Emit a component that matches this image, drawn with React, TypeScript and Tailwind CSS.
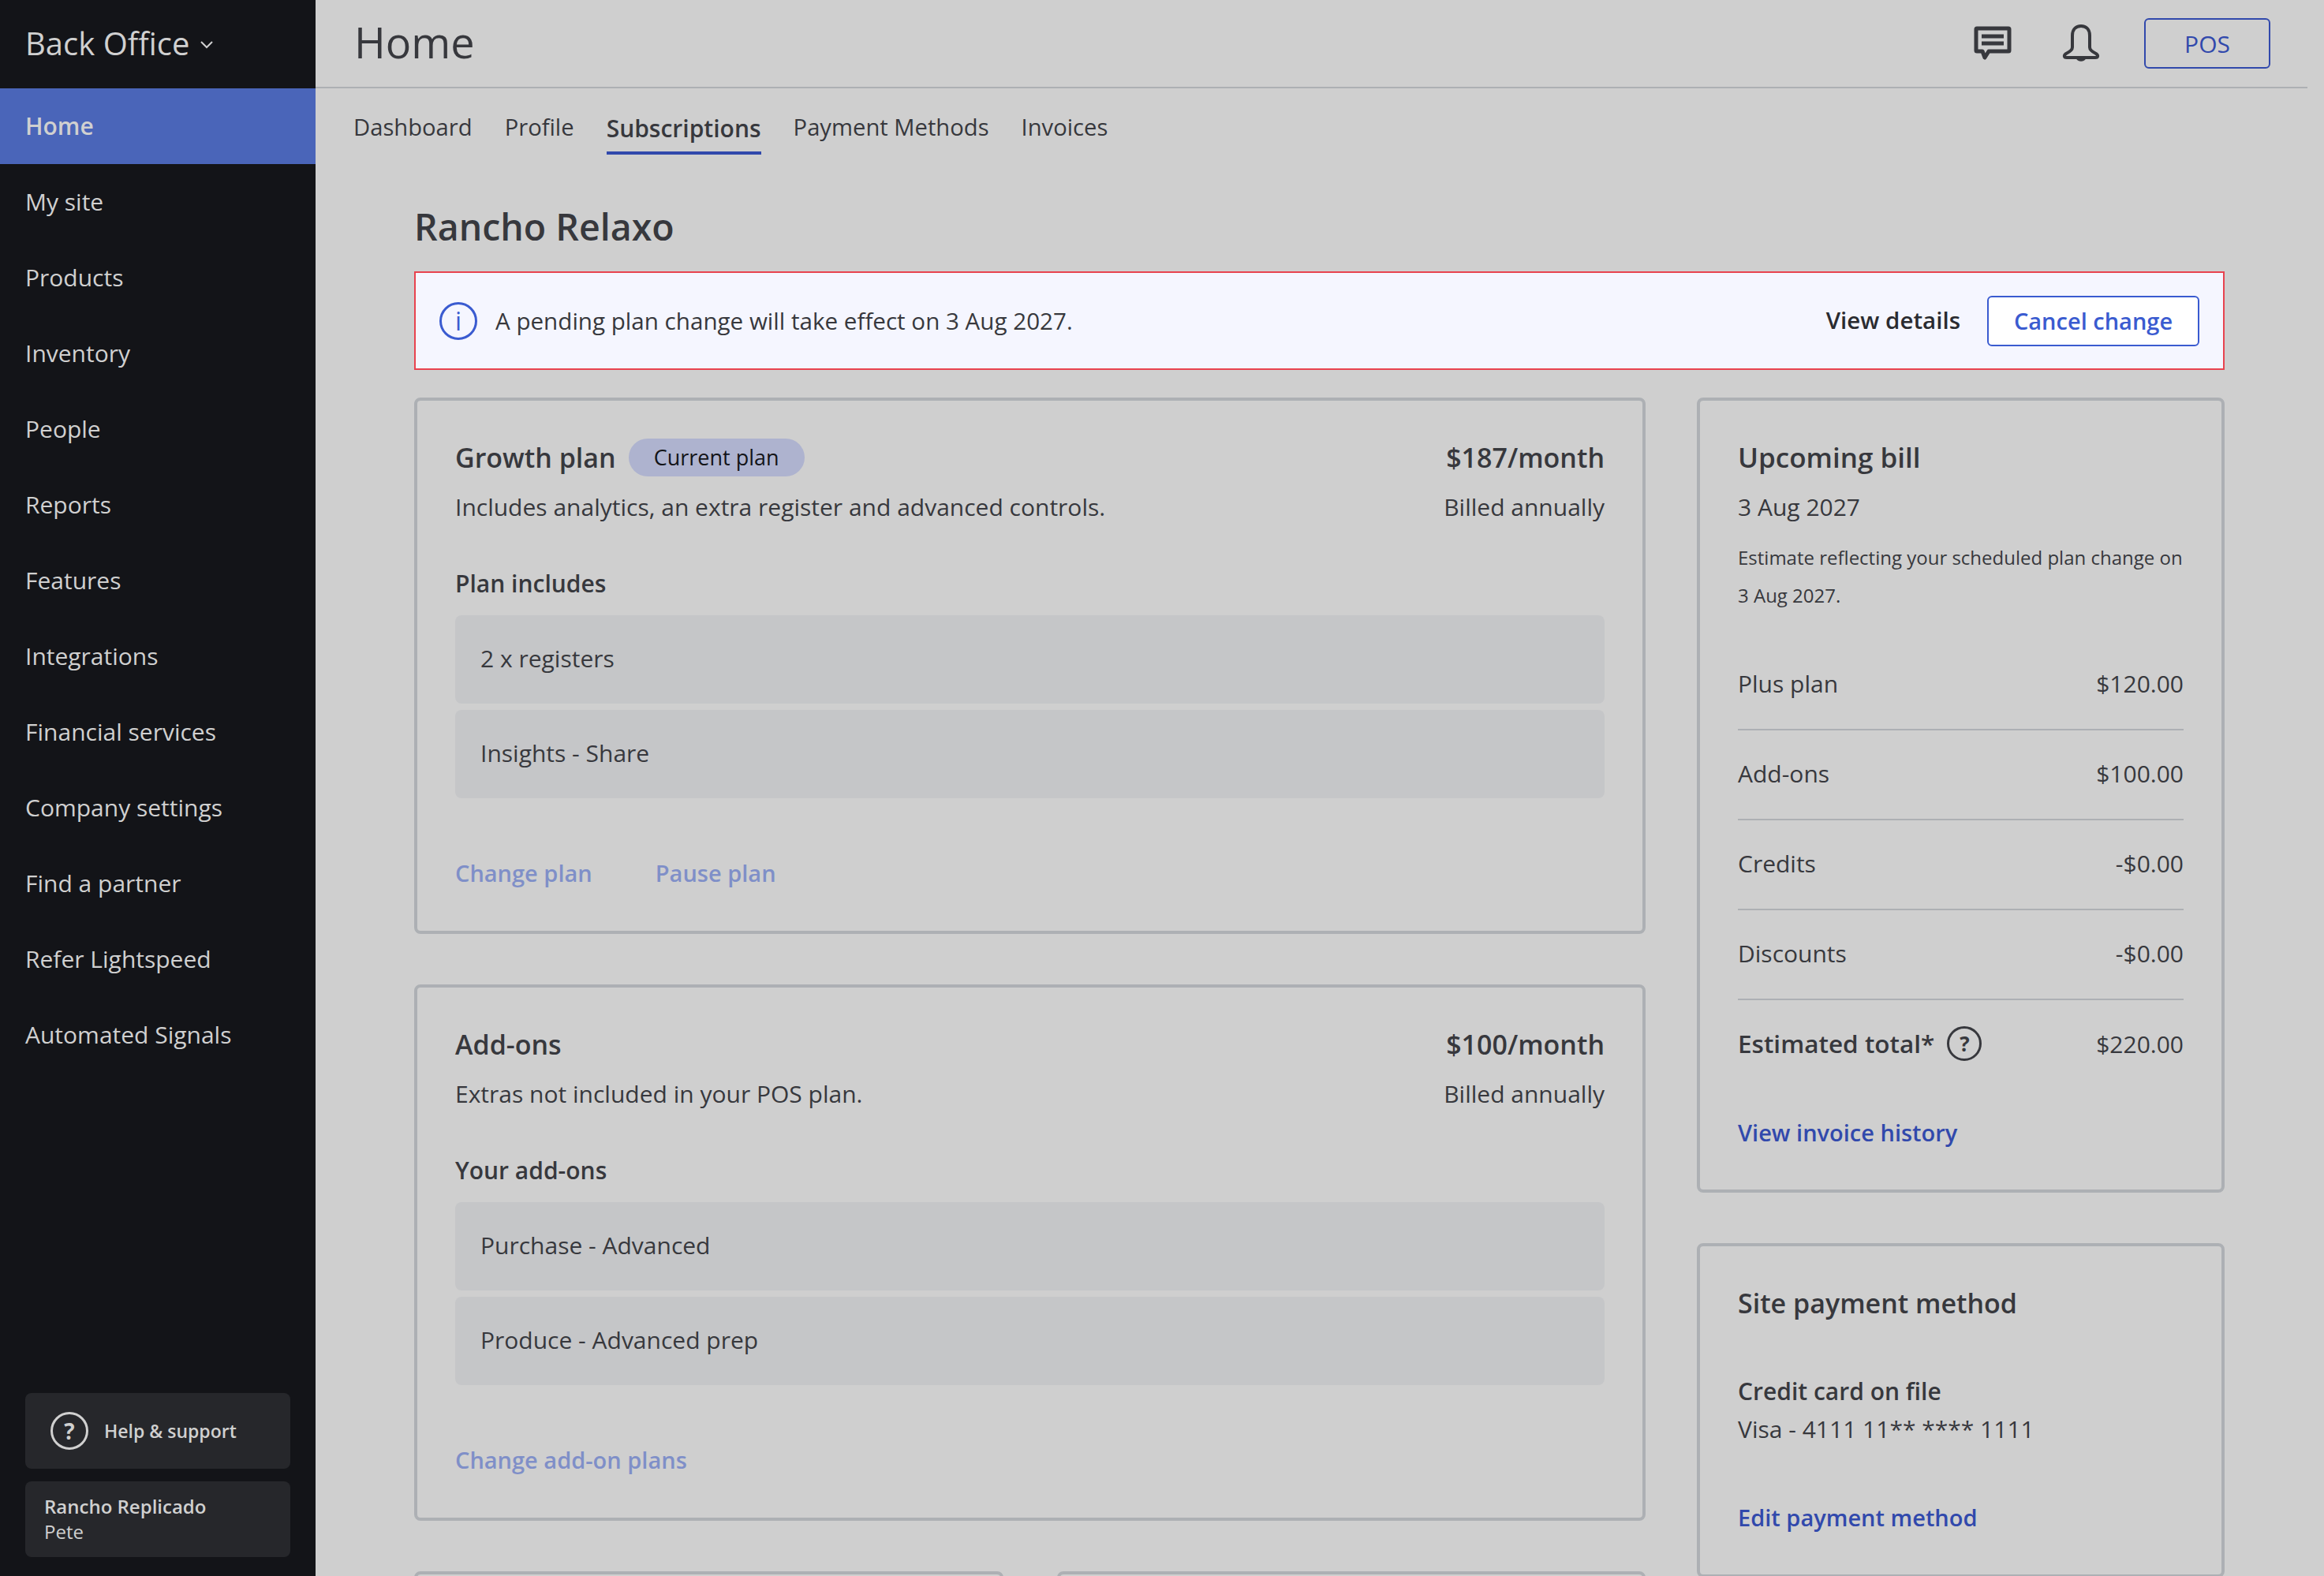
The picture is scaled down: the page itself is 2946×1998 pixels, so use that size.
import React from 'react';

const navItems = [
  'Home',
  'My site',
  'Products',
  'Inventory',
  'People',
  'Reports',
  'Features',
  'Integrations',
  'Financial services',
  'Company settings',
  'Find a partner',
  'Refer Lightspeed',
  'Automated Signals'
];

const tabs = ['Dashboard', 'Profile', 'Subscriptions', 'Payment Methods', 'Invoices'];

const billRows = [
  { label: 'Plus plan', value: '$120.00' },
  { label: 'Add-ons', value: '$100.00' },
  { label: 'Credits', value: '-$0.00' },
  { label: 'Discounts', value: '-$0.00' }
];

function ChatIcon() {
  return (
    <svg width="48" height="44" viewBox="0 0 48 44" fill="none" stroke="#37383d" strokeWidth="5" strokeLinejoin="round">
      <path d="M4 3h40a1 1 0 0 1 1 1v27a1 1 0 0 1-1 1H19l-5 8-3-8H4a1 1 0 0 1-1-1V4a1 1 0 0 1 1-1z" />
      <path d="M10 13h28M10 22h28" />
    </svg>
  );
}

function BellIcon() {
  return (
    <svg width="48" height="48" viewBox="0 0 48 48" fill="none" stroke="#37383d" strokeWidth="4" strokeLinejoin="round">
      <path d="M24 2c-7 0-11 5-11 12v15c0 3-2 5-8 8-3 2-3 5 1 5h36c4 0 4-3 1-5-6-3-8-5-8-8V14c0-7-4-12-11-12z" />
      <path d="M18 43h12c-1 5-11 5-12 0z" fill="#37383d" stroke="none" />
    </svg>
  );
}

function HelpCircle({ className }: { className: string }) {
  return (
    <span className={`flex shrink-0 items-center justify-center rounded-full border-[3px] font-bold ${className}`}>?</span>
  );
}

function Sidebar() {
  return (
    <aside className="flex h-full w-[400px] shrink-0 flex-col bg-[#131418] text-[#d0d0d0]">
      <div className="flex h-[112px] items-center pb-[3px] pl-8 text-[40px]">
        Back Office
        <svg className="ml-[14px] mt-[4px]" width="16" height="10" viewBox="0 0 16 10" fill="none" stroke="#d0d0d0" strokeWidth="2">
          <path d="M1 1l7 7 7-7" />
        </svg>
      </div>
      <nav className="flex-1">
        {navItems.map((item) => (
          <div
            key={item}
            className={`flex h-[96px] items-center pb-[2px] pl-8 text-[30px] ${item === 'Home' ? 'bg-[#4a65b9] font-semibold' : ''}`}
          >
            {item}
          </div>
        ))}
      </nav>
      <div className="flex flex-col gap-4 px-8 pb-6">
        <div className="flex h-[96px] items-center gap-5 rounded-lg bg-[#26272b] pl-8 text-[23px] font-semibold">
          <HelpCircle className="h-12 w-12 border-[#d0d0d0] text-[28px]" />
          Help &amp; support
        </div>
        <div className="flex h-[96px] flex-col justify-center rounded-lg bg-[#26272b] pl-6 text-[24px] leading-8">
          <span className="font-semibold">Rancho Replicado</span>
          <span>Pete</span>
        </div>
      </div>
    </aside>
  );
}

function TopBar() {
  return (
    <div className="mr-[21px] flex h-[112px] shrink-0 items-center justify-between border-b-2 border-[#adb0b4] pl-[49px] pr-[47px]">
      <h1 className="pb-[3px] text-[54px] text-[#37383d]">Home</h1>
      <div className="flex items-center">
        <ChatIcon />
        <span className="ml-[64px]"><BellIcon /></span>
        <button className="ml-[56px] h-16 w-[160px] rounded-md border-2 border-[#3149ac] text-[30px] text-[#3149ac]">POS</button>
      </div>
    </div>
  );
}

function Tabs() {
  return (
    <div className="flex h-[84px] shrink-0 gap-[41px] pl-[48px]">
      {tabs.map((tab) => (
        <div
          key={tab}
          className={`flex h-full items-center border-b-4 pt-5 ${tab === 'Subscriptions' ? 'border-[#3149ac] text-[30px] font-semibold' : 'border-transparent text-[29.2px]'}`}
        >
          {tab}
        </div>
      ))}
    </div>
  );
}

function Banner() {
  return (
    <div className="flex h-[125px] items-center border-2 border-[#e8434f] bg-[#f5f6ff] pl-[30px] pr-[30px]">
      <span className="flex h-12 w-12 items-center justify-center rounded-full border-[3px] border-[#3a5bd0] text-[32px] text-[#3a5bd0]">i</span>
      <span className="ml-[23px] flex-1 pt-[2px] text-[29.6px]">A pending plan change will take effect on 3 Aug 2027.</span>
      <span className="text-[29.5px] font-semibold text-[#2a2b30]">View details</span>
      <button className="ml-[34px] h-16 w-[269px] rounded-md border-2 border-[#3a5bd0] bg-white text-[29px] font-semibold text-[#3a5bd0]">Cancel change</button>
    </div>
  );
}

function PlanCard({ title, badge, price, description, listTitle, items, links }: {
  title: string;
  badge?: string;
  price: string;
  description: string;
  listTitle: string;
  items: string[];
  links: string[];
}) {
  return (
    <section className="rounded-lg border-4 border-[#adb0b4] px-12 pb-[49px] pt-12">
      <div className="flex items-center justify-between leading-[48px]">
        <div className="flex items-center">
          <h3 className="text-[34px] font-semibold">{title}</h3>
          {badge && (
            <span className="ml-4 flex h-12 items-center rounded-full bg-[#aeb3cf] px-8 text-[27px] text-[#131418]">{badge}</span>
          )}
        </div>
        <span className="text-[34px] font-semibold">{price}</span>
      </div>
      <div className="mt-[15px] flex justify-between text-[30px] leading-[48px]">
        <span>{description}</span>
        <span>Billed annually</span>
      </div>
      <h4 className="mt-[49px] text-[30px] font-semibold leading-[48px]">{listTitle}</h4>
      <div className="mt-4 flex flex-col gap-2">
        {items.map((item) => (
          <div key={item} className="flex h-[112px] items-center rounded-lg bg-[#c5c6c8] pb-[3px] pl-8 text-[30px]">{item}</div>
        ))}
      </div>
      <div className="mt-[71px] flex gap-20 text-[29px] font-semibold leading-[48px] text-[#7f8fc8]">
        {links.map((link) => (
          <span key={link}>{link}</span>
        ))}
      </div>
    </section>
  );
}

function BillCard() {
  return (
    <section className="rounded-lg border-4 border-[#adb0b4] px-12 pb-12 pt-12">
      <h3 className="text-[35px] font-semibold leading-[48px]">Upcoming bill</h3>
      <p className="mt-[15px] text-[30px] leading-[48px]">3 Aug 2027</p>
      <p className="mt-4 text-[24px] leading-[48px]">Estimate reflecting your scheduled plan change on 3 Aug 2027.</p>
      <div className="mt-[33px]">
        {billRows.map((row) => (
          <div key={row.label} className="flex h-[114px] items-center justify-between border-b-2 border-[#adb0b4] pb-1 text-[30px]">
            <span>{row.label}</span>
            <span>{row.value}</span>
          </div>
        ))}
        <div className="flex h-[114px] items-center justify-between pb-1 text-[30px]">
          <span className="flex items-center text-[31.5px] font-semibold">
            Estimated total*
            <HelpCircle className="ml-4 h-11 w-11 border-[#37383d] text-[26px]" />
          </span>
          <span>$220.00</span>
        </div>
      </div>
      <p className="mt-[30px] text-[29px] font-semibold leading-[48px] text-[#3149ac]">View invoice history</p>
    </section>
  );
}

function PaymentCard() {
  return (
    <section className="rounded-lg border-4 border-[#adb0b4] px-12 pb-12 pt-12">
      <h3 className="text-[34px] font-semibold leading-[48px]">Site payment method</h3>
      <p className="mt-16 text-[30px] font-semibold leading-[48px]">Credit card on file</p>
      <p className="text-[30px] leading-[48px]">Visa - 4111 11** **** 1111</p>
      <p className="mt-16 text-[29px] font-semibold leading-[48px] text-[#3149ac]">Edit payment method</p>
    </section>
  );
}

export default function App() {
  return (
    <div className="flex h-[1998px] w-[2946px] overflow-hidden bg-[#cfcfcf] font-['Open_Sans',sans-serif] text-[#37383d]">
      <Sidebar />
      <main className="flex min-w-0 flex-1 flex-col">
        <TopBar />
        <Tabs />
        <div className="pl-[125px] pr-[126px]">
          <h2 className="mt-[61px] text-[46.5px] font-semibold leading-[60px]">Rancho Relaxo</h2>
          <div className="mt-[27px]">
            <Banner />
          </div>
          <div className="mt-[35px] flex gap-[65px]">
            <div className="flex w-[1561px] shrink-0 flex-col gap-16">
              <PlanCard
                title="Growth plan"
                badge="Current plan"
                price="$187/month"
                description="Includes analytics, an extra register and advanced controls."
                listTitle="Plan includes"
                items={['2 x registers', 'Insights - Share']}
                links={['Change plan', 'Pause plan']}
              />
              <PlanCard
                title="Add-ons"
                price="$100/month"
                description="Extras not included in your POS plan."
                listTitle="Your add-ons"
                items={['Purchase - Advanced', 'Produce - Advanced prep']}
                links={['Change add-on plans']}
              />
              <div className="flex gap-[68px]">
                <div className="h-[100px] flex-1 rounded-lg border-4 border-[#adb0b4]" />
                <div className="h-[100px] flex-1 rounded-lg border-4 border-[#adb0b4]" />
              </div>
            </div>
            <div className="flex min-w-0 flex-1 flex-col gap-16">
              <BillCard />
              <PaymentCard />
            </div>
          </div>
        </div>
      </main>
    </div>
  );
}
